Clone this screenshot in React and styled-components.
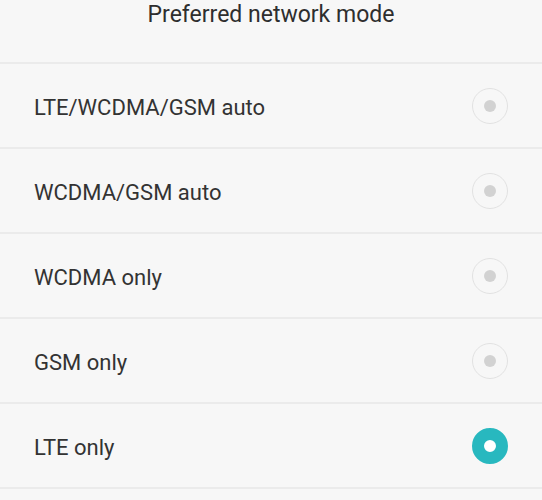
import React from "react";
import styled, { createGlobalStyle } from "styled-components";

const Global = createGlobalStyle`
  html, body { margin: 0; padding: 0; background: #f7f7f7; }
  body { font-family: Roboto, "Noto Sans", "Liberation Sans", sans-serif; }
`;

const Page = styled.div`
  width: 542px;
  height: 500px;
  background: #f7f7f7;
  overflow: hidden;
`;

const Header = styled.div`
  height: 62px;
  display: flex;
  justify-content: center;
  align-items: flex-start;
  border-bottom: 2px solid #ebebeb;
`;

const Title = styled.div`
  font-size: 23px;
  line-height: 28px;
  color: #2e2e2e;
  margin-top: 1px;
`;

const List = styled.div`
  display: flex;
  flex-direction: column;
`;

const Row = styled.div`
  height: 83px;
  display: flex;
  align-items: center;
  justify-content: space-between;
  padding: 0 34px 0 34px;
  border-bottom: 2px solid #ebebeb;
`;

const Label = styled.span`
  font-size: 22px;
  color: #333333;
  padding-top: 3px;
`;

const Radio = styled.span`
  box-sizing: border-box;
  width: 36px;
  height: 36px;
  border-radius: 50%;
  display: flex;
  align-items: center;
  justify-content: center;
  background: ${(p) => (p.$checked ? "#ffffff" : "transparent")};
  border: ${(p) => (p.$checked ? "12px solid #28b8bf" : "1.5px solid #e2e2e2")};
  &::after {
    content: "";
    display: ${(p) => (p.$checked ? "none" : "block")};
    width: 12px;
    height: 12px;
    border-radius: 50%;
    background: #d2d2d2;
  }
`;

const options = [
  "LTE/WCDMA/GSM auto",
  "WCDMA/GSM auto",
  "WCDMA only",
  "GSM only",
  "LTE only",
];

export default function App() {
  const selected = 4;
  return (
    <Page>
      <Global />
      <Header>
        <Title>Preferred network mode</Title>
      </Header>
      <List>
        {options.map((o, i) => (
          <Row key={o}>
            <Label>{o}</Label>
            <Radio $checked={i === selected} />
          </Row>
        ))}
      </List>
    </Page>
  );
}
